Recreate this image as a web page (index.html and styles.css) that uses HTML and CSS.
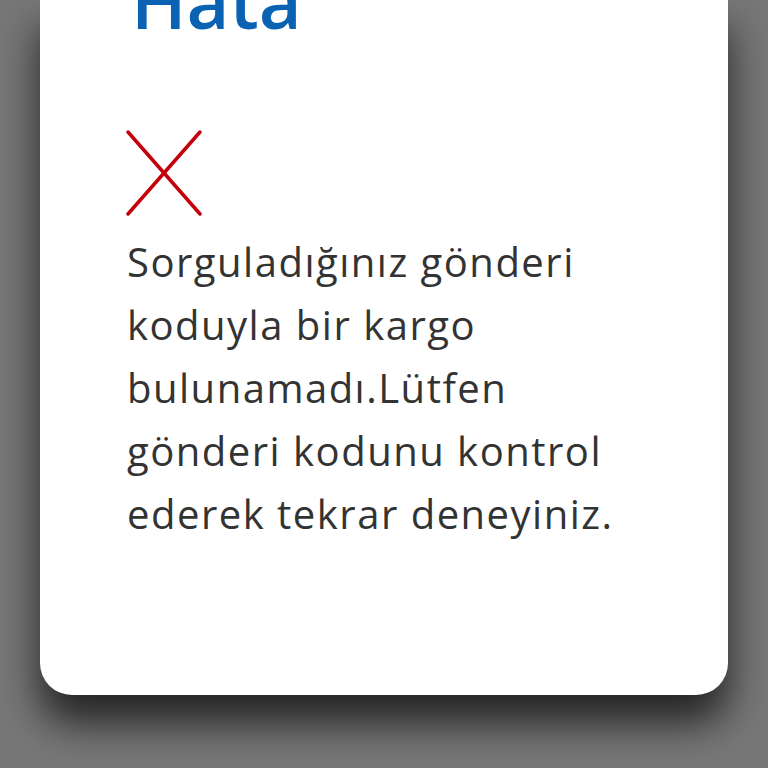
FILE: index.html
```html
<!DOCTYPE html>
<html lang="tr">
<head>
<meta charset="utf-8">
<link rel="stylesheet" href="styles.css">
</head>
<body>
<div class="page">
  <div class="card">
    <h1 class="title">Hata</h1>
    <svg class="icon" width="76" height="86" viewBox="0 0 76 86">
      <line x1="2" y1="2" x2="74" y2="84" stroke="#c4000b" stroke-width="3.5" stroke-linecap="round"/>
      <line x1="74" y1="2" x2="2" y2="84" stroke="#c4000b" stroke-width="3.5" stroke-linecap="round"/>
    </svg>
    <p class="message">Sorguladığınız gönderi koduyla bir kargo bulunamadı.Lütfen gönderi kodunu kontrol ederek tekrar deneyiniz.</p>
  </div>
</div>
</body>
</html>
```
FILE: styles.css
```css
html, body {
  margin: 0;
  padding: 0;
  background: #777777;
  height: 768px;
  overflow: hidden;
}
.page {
  padding: 0 40px;
}
.card {
  background: #ffffff;
  height: 695px;
  border-radius: 0 0 32px 32px;
  box-shadow: 0 28px 40px rgba(0, 0, 0, 0.7);
  padding: 0 80px 0 87px;
  box-sizing: border-box;
  overflow: hidden;
  display: flex;
  flex-direction: column;
}
.title {
  margin: -36px 0 0 4px;
  font-family: "Open Sans", sans-serif;
  font-weight: 600;
  font-size: 74px;
  line-height: 1;
  color: #0a62b3;
}
.icon {
  display: block;
  margin: 92px 0 0 -1px;
}
.message {
  margin: 14px 0 0 0;
  font-family: "Open Sans", sans-serif;
  font-size: 40px;
  line-height: 63px;
  letter-spacing: 1.5px;
  color: #333333;
}
```
